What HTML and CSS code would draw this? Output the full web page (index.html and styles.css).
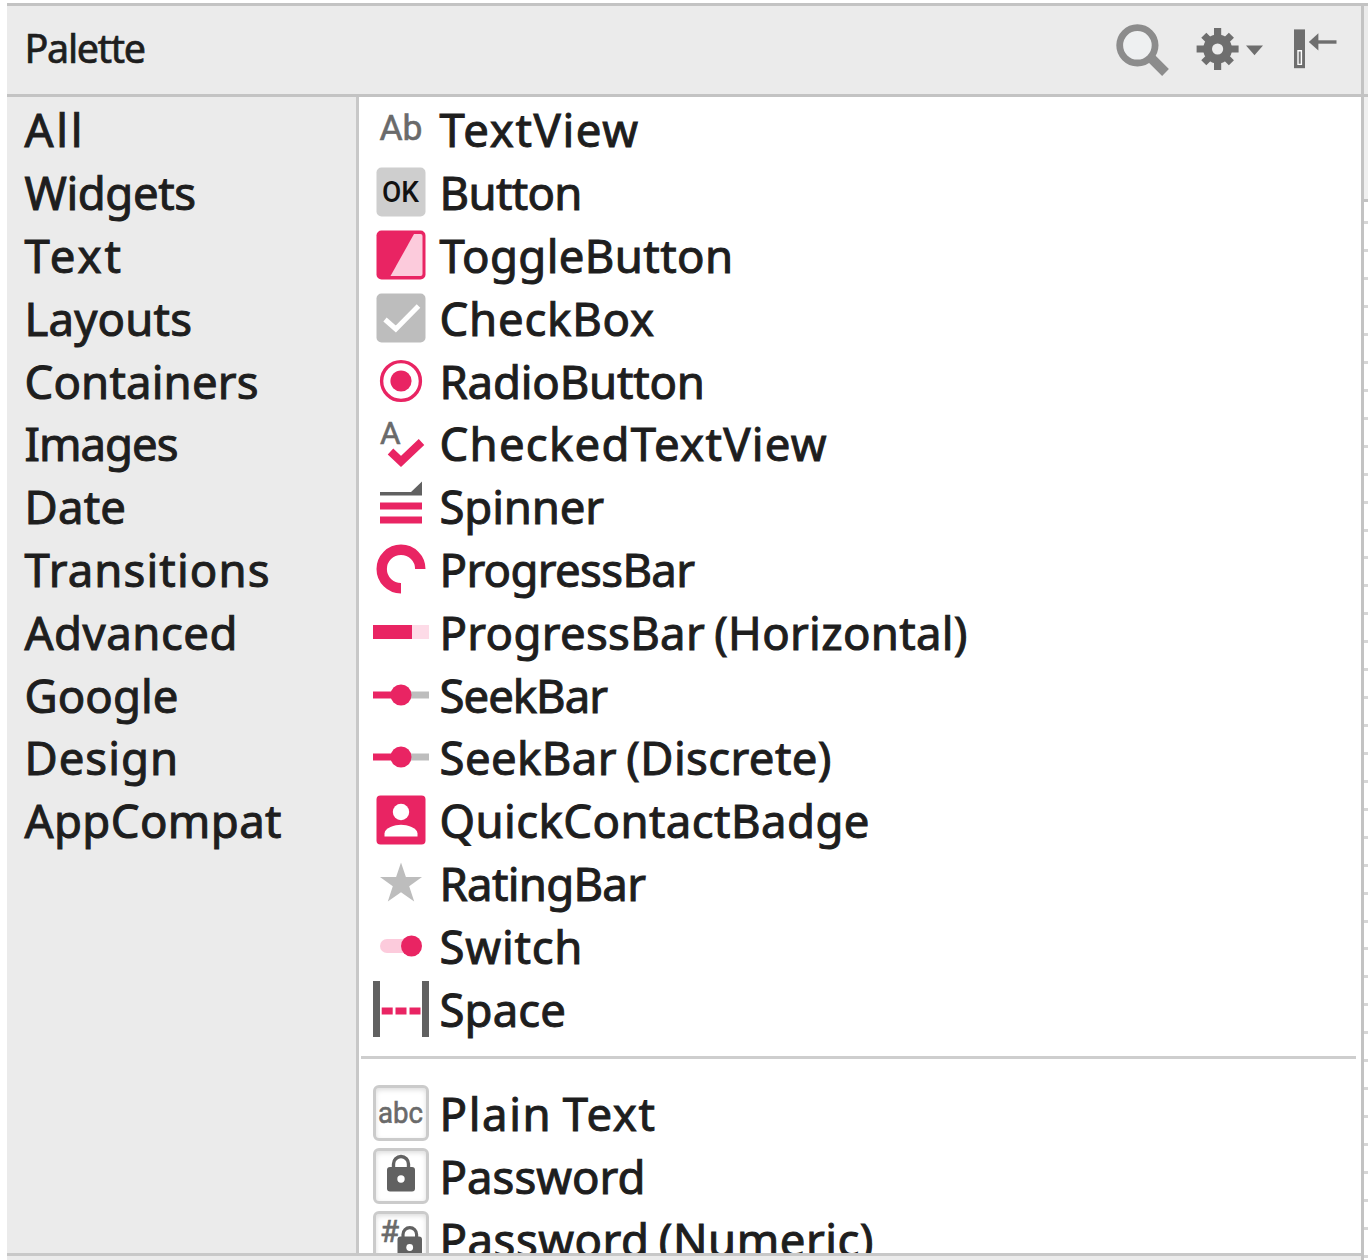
FILE: index.html
```html
<!DOCTYPE html>
<html lang="en">
<head>
<meta charset="utf-8">
<title>Palette</title>
<link rel="stylesheet" href="styles.css">
</head>
<body>
<div class="window">
  <section class="palette">
    <header class="header">
      <h1 class="title"><span data-w="121.5">Palette</span></h1>
      <div class="tools">
        <svg class="tool-search" width="56" height="56" viewBox="1114 21 56 56"><circle cx="1137.4" cy="45.3" r="17.7" fill="#eef0f1" stroke="#8c8c8c" stroke-width="6.8"/><path d="M1151 58l14.5 14.5" stroke="#8c8c8c" stroke-width="9.6"/></svg>
        <svg class="tool-gear" width="72" height="56" viewBox="1194 21 72 56"><g stroke="#6e6e6e" stroke-width="7.2"><path d="M1217.6 28v42M1196.6 49h42M1203.8 35.2l27.6 27.6M1231.4 35.2l-27.6 27.6"/></g><circle cx="1217.6" cy="49" r="14.4" fill="#6e6e6e"/><circle cx="1217.6" cy="49" r="5.6" fill="#ebebeb"/><path d="M1246 45.6h17l-8.5 9.6z" fill="#6e6e6e"/></svg>
        <svg class="tool-hide" width="46" height="56" viewBox="1293 21 46 56"><path d="M1294 29.4h11v38.8h-11z" fill="#6e6e6e"/><path d="M1298 50.8h3.4v13.6h-3.4z" fill="#757575" stroke="#fff" stroke-width="1.4"/><path d="M1308.8 42l9.6-8.8v17.4z" fill="#6e6e6e"/><path d="M1317 42h19.5" stroke="#6e6e6e" stroke-width="3.4"/></svg>
      </div>
    </header>
    <div class="content">
      <nav class="groups">
        <div class="row"><span data-w="58">All</span></div>
        <div class="row"><span data-w="171.5">Widgets</span></div>
        <div class="row"><span data-w="96.5">Text</span></div>
        <div class="row"><span data-w="167.5">Layouts</span></div>
        <div class="row"><span data-w="234">Containers</span></div>
        <div class="row"><span data-w="154">Images</span></div>
        <div class="row"><span data-w="101.5">Date</span></div>
        <div class="row"><span data-w="245">Transitions</span></div>
        <div class="row"><span data-w="213">Advanced</span></div>
        <div class="row"><span data-w="154">Google</span></div>
        <div class="row"><span data-w="153.5">Design</span></div>
        <div class="row"><span data-w="257">AppCompat</span></div>
      </nav>
      <main class="items">
        <div class="row"><svg class="icon" viewBox="0 0 56 56"><text class="glyph" x="6.5" y="38.5" font-size="34.5" textLength="43" lengthAdjust="spacingAndGlyphs">Ab</text></svg><span data-w="198.5">TextView</span></div>
        <div class="row"><svg class="icon" viewBox="0 0 56 56"><rect x="3.5" y="3.5" width="49" height="49" rx="5" fill="#cecece"/><text class="glyph ok" x="9" y="38" font-size="29" textLength="37" lengthAdjust="spacingAndGlyphs">OK</text></svg><span data-w="143">Button</span></div>
        <div class="row"><svg class="icon" viewBox="0 0 56 56"><rect x="3.5" y="3.5" width="49" height="49" rx="5" fill="#e92463"/><path d="M41 7h6.5q2 0 2 2v38q0 2-2 2H17.5z" fill="#fccbdc"/></svg><span data-w="293.5">ToggleButton</span></div>
        <div class="row"><svg class="icon" viewBox="0 0 56 56"><rect x="3.5" y="3.5" width="49" height="49" rx="5" fill="#bdbdbd"/><path d="M12 29.5l10.8 9.5L45.5 16" fill="none" stroke="#fff" stroke-width="5"/></svg><span data-w="214.5">CheckBox</span></div>
        <div class="row"><svg class="icon" viewBox="0 0 56 56"><circle cx="28" cy="28" r="19.4" fill="none" stroke="#e92463" stroke-width="3.4"/><circle cx="28" cy="28" r="10.6" fill="#e92463"/></svg><span data-w="265.5">RadioButton</span></div>
        <div class="row"><svg class="icon" viewBox="0 0 56 56"><text class="glyph" x="7" y="29" font-size="31.5">A</text><path d="M17.5 36.5L28 46.5 48.5 27" fill="none" stroke="#e92463" stroke-width="8"/></svg><span data-w="387">CheckedTextView</span></div>
        <div class="row"><svg class="icon" viewBox="0 0 56 56"><path d="M7 14h31L49 3.5v14H7z" fill="#616161"/><path d="M7 24.5h42v7H7zM7 38.5h42v7H7z" fill="#e92463"/></svg><span data-w="164.5">Spinner</span></div>
        <div class="row"><svg class="icon" viewBox="0 0 56 56"><path d="M28 47.3A19.3 19.3 0 1 1 47.3 28" fill="none" stroke="#e92463" stroke-width="10.4"/></svg><span data-w="255.5">ProgressBar</span></div>
        <div class="row"><svg class="icon" viewBox="0 0 56 56"><path d="M0 21h39v14H0z" fill="#e92463"/><path d="M39 21h17v14H39z" fill="#fddbe7"/></svg><span data-w="528">ProgressBar (Horizontal)</span></div>
        <div class="row"><svg class="icon" viewBox="0 0 56 56"><path d="M0 24.5h28v7H0z" fill="#e92463"/><path d="M28 24.5h28v7H28z" fill="#bdbdbd"/><circle cx="28" cy="28" r="10.5" fill="#e92463"/></svg><span data-w="168.5">SeekBar</span></div>
        <div class="row"><svg class="icon" viewBox="0 0 56 56"><path d="M0 24.5h28v7H0z" fill="#e92463"/><path d="M28 24.5h28v7H28z" fill="#bdbdbd"/><circle cx="28" cy="28" r="10.5" fill="#e92463"/></svg><span data-w="392">SeekBar (Discrete)</span></div>
        <div class="row"><svg class="icon" viewBox="0 0 56 56"><rect x="3.5" y="3.5" width="49" height="49" rx="4" fill="#e92463"/><circle cx="28" cy="20" r="8.2" fill="#fff"/><path d="M11.5 44.5v-3c0-5.5 10.5-8.7 16.5-8.7s16.5 3.2 16.5 8.7v3z" fill="#fff"/></svg><span data-w="430">QuickContactBadge</span></div>
        <div class="row"><svg class="icon" viewBox="0 0 56 56"><path d="M28 7.500l4.900 14.600H49L36.200 31.300 41.200 46.500 28 37.300 14.800 46.500 19.800 31.300 7 22.100h16.100z" fill="#bdbdbd"/></svg><span data-w="206.5">RatingBar</span></div>
        <div class="row"><svg class="icon" viewBox="0 0 56 56"><rect x="7" y="21" width="35" height="14" rx="7" fill="#fccbdc"/><circle cx="38.5" cy="28" r="10.5" fill="#e92463"/></svg><span data-w="143">Switch</span></div>
        <div class="row"><svg class="icon" viewBox="0 0 56 56"><path d="M0 0h7v56H0zM49 0h7v56h-7z" fill="#616161"/><path d="M8.7 26.5h11v7h-11zM22.5 26.5h11v7h-11zM36.5 26.5h11v7h-11z" fill="#e92463"/></svg><span data-w="126.5">Space</span></div>
        <hr class="separator">
        <div class="row"><svg class="icon field" viewBox="3 3 50 50"><text class="glyph" x="5" y="38" font-size="29" textLength="45" lengthAdjust="spacingAndGlyphs">abc</text></svg><span data-w="215.5">Plain Text</span></div>
        <div class="row"><svg class="icon field" viewBox="3 3 50 50"><rect x="14" y="19" width="28" height="24.5" rx="3" fill="#616161"/><path d="M20.500 20v-4a7.500 7.500 0 0 1 15 0v4" fill="none" stroke="#616161" stroke-width="3.4"/><circle cx="28" cy="31" r="3.7" fill="#fff"/></svg><span data-w="206">Password</span></div>
        <div class="row"><svg class="icon field" viewBox="3 3 50 50"><text class="glyph" x="7" y="31" font-size="31">#</text><rect x="24.5" y="25.5" width="24.5" height="24" rx="3" fill="#616161"/><path d="M30 27v-3.500a6.800 6.800 0 0 1 13.600 0V27" fill="none" stroke="#616161" stroke-width="3.2"/><circle cx="36.7" cy="36.5" r="3.4" fill="#fff"/></svg><span data-w="434">Password (Numeric)</span></div>
      </main>
    </div>
  </section>
  <aside class="ruler">
    <div class="ruler-head"></div>
    <div class="ruler-corner"></div>
    <div class="ruler-ticks"></div>
  </aside>
</div>
<script src="fit.js"></script>
</body>
</html>
```
FILE: styles.css
```css
* { box-sizing: border-box; }
body {
  margin: 0;
  background: #fff;
  color: #1e1e1e;
  font-family: "Noto Sans", "Open Sans", sans-serif;
  font-size: 45.5px;
  word-spacing: -3px;
  -webkit-text-stroke: 1px #1e1e1e;
}
.window {
  display: flex;
  width: 1368px;
  height: 1260px;
  padding: 3px 0 0 7px;
  overflow: hidden;
}
.palette {
  display: flex;
  flex-direction: column;
  width: 1357px;
  height: 1257px;
  border-top: 3px solid #c3c3c3;
  border-right: 3px solid #c3c3c3;
  background: #ebebeb;
}
.header {
  display: flex;
  justify-content: space-between;
  flex: none;
  height: 91px;
  padding-left: 17.5px;
  border-bottom: 3px solid #c3c3c3;
}
.title {
  margin: 0;
  font-size: 39.5px;
  font-weight: 400;
  line-height: 85px;
  -webkit-text-stroke-width: 0.7px;
}
.tools {
  display: flex;
  align-items: flex-start;
  padding: 15px 22px 0 0;
}
.tool-search { margin-right: 24px; }
.tool-gear { margin-right: 27px; }
.content {
  display: flex;
  flex: none;
  height: 1159px;
  border-bottom: 3px solid #c8c8c8;
  overflow: hidden;
}
.groups {
  flex: none;
  width: 352px;
  padding: 1px 0 0 17.5px;
  border-right: 3px solid #c8c8c8;
}
.items {
  flex: 1;
  padding: 1px 0 0 14px;
  background: #fff;
}
.row {
  display: flex;
  align-items: center;
  height: 62.8px;
  line-height: 62px;
  white-space: nowrap;
}
.icon {
  flex: none;
  width: 56px;
  height: 56px;
  margin-right: 10.5px;
}
.field {
  border: 3px solid #cbcbcb;
  border-radius: 6px;
  box-shadow: inset 0 2px 5px #ddd;
}
.glyph {
  font-family: Roboto, sans-serif;
  fill: #6a6a6a;
  stroke: #6a6a6a;
  stroke-width: 0.6px;
  -webkit-text-stroke: 0.6px #6a6a6a;
}
.ok {
  font-weight: 500;
  fill: #111;
  stroke: none;
  -webkit-text-stroke: 0;
}
.separator {
  height: 3px;
  margin: 16px 5px 23px -12px;
  border: 0;
  background: #cecece;
}
.ruler {
  display: flex;
  flex-direction: column;
  width: 4px;
  height: 1257px;
}
.ruler-head {
  height: 94px;
  border-top: 3px solid #c3c3c3;
  border-bottom: 3px solid #c3c3c3;
  background: #ebebeb;
}
.ruler-corner {
  height: 105px;
  border-bottom: 3px solid #c3c3c3;
  background: #f0f0f0;
}
.ruler-ticks {
  flex: 1;
  background: repeating-linear-gradient(#fff 0 19.3px, #d6d6d6 19.3px 22.3px, #fff 22.3px 27.93px);
}
```
FILE: fit.js
```js
document.querySelectorAll('[data-w]').forEach(function (label) {
  var natural = label.getBoundingClientRect().width;
  var gaps = label.textContent.length - 1;
  label.style.letterSpacing = (label.dataset.w - natural) / gaps + 'px';
});
```
